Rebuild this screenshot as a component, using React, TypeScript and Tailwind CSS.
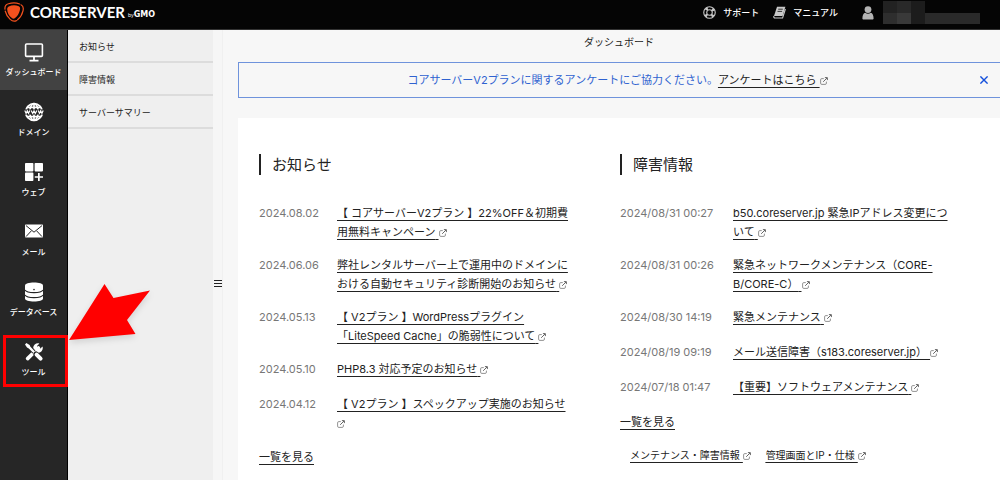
import type { ReactNode } from "react";

type Notice = {
  date: string;
  lines: string[];
  iconOnNewLine?: boolean;
};

type NavItem = {
  label: string;
  icon: ReactNode;
  active?: boolean;
  marked?: boolean;
};

const MonitorIcon = (
  <svg viewBox="0 0 20 20" className="size-5" fill="none" stroke="currentColor" strokeWidth="1.6">
    <rect x="1.6" y="2" width="16.8" height="12.4" rx="1" />
    <path d="M10 14v4M5.5 18.6h9" strokeWidth="1.8" />
  </svg>
);

const GlobeIcon = (
  <svg viewBox="0 0 20 20" className="size-5">
    <g fill="none" stroke="currentColor" strokeWidth="1.7">
      <circle cx="10" cy="10" r="8.4" />
      <ellipse cx="10" cy="10" rx="4.2" ry="8.4" />
      <path d="M10 1.6v16.8M2.8 5.4h14.4M2.8 14.6h14.4" />
    </g>
    <rect x="0" y="7.4" width="20" height="5.2" fill="#262626" />
    <path
      d="M.8 8.4l1.3 3 1.2-2.6 1.2 2.6 1.3-3M7.2 8.4l1.5 3L10 8.8l1.3 2.6 1.5-3M14.2 8.4l1.3 3 1.2-2.6 1.2 2.6 1.3-3"
      fill="none"
      stroke="currentColor"
      strokeWidth="1.2"
    />
  </svg>
);

const BlocksIcon = (
  <svg viewBox="0 0 20 20" className="size-5" fill="currentColor">
    <rect x="1" y="1" width="8.4" height="8.4" rx=".8" />
    <rect x="10.6" y="1" width="8.4" height="8.4" rx=".8" />
    <rect x="1" y="10.6" width="8.4" height="8.4" rx=".8" />
    <path d="M14 11h1.7v3.2H19v1.6h-3.3V19H14v-3.2h-3.2v-1.6H14z" />
  </svg>
);

const MailIcon = (
  <svg viewBox="0 0 20 20" className="size-5">
    <rect x="1" y="2.4" width="18" height="13.2" rx=".8" fill="currentColor" />
    <path
      d="M2 3.600l8 6.600 8-6.600M2 14.600l5.400-5.800M18 14.600l-5.400-5.800"
      fill="none"
      stroke="#262626"
      strokeWidth="1"
    />
  </svg>
);

const DatabaseIcon = (
  <svg viewBox="0 0 20 20" className="size-5">
    <path
      d="M1 3.4C1 1.6 5 .4 10 .4s9 1.2 9 3v13.2c0 1.8-4 3-9 3s-9-1.2-9-3z"
      fill="currentColor"
    />
    <path
      d="M1 8c1 1.700 4.600 2.600 9 2.600s8-.9 9-2.600M1 13c1 1.700 4.600 2.600 9 2.600s8-.9 9-2.600"
      fill="none"
      stroke="#262626"
      strokeWidth="1.1"
    />
    <circle cx="10" cy="7.6" r=".8" fill="#262626" />
  </svg>
);

const ToolsIcon = (
  <svg viewBox="0 0 20 20" className="size-5">
    <path d="M3.6 16.6L14.4 6" stroke="currentColor" strokeWidth="3.6" strokeLinecap="round" />
    <path
      d="M14.2 1.2a4.8 4.8 0 1 0 4.6 4.8l-.2-1.4-2.6 2.2-2.4-.6-.6-2.2 2.4-2.6z"
      fill="currentColor"
    />
    <path d="M3 3l7 7" stroke="#262626" strokeWidth="4" />
    <path d="M1 2.4L2.4 1l3.2 2 .8 1.8 4.6 4.6-1.6 1.6-4.6-4.6L3 5.6z" fill="currentColor" />
    <path d="M12 12l4.6 4.6" stroke="#262626" strokeWidth="5.2" strokeLinecap="round" />
    <path d="M12.6 12.6l4 4" stroke="currentColor" strokeWidth="4" strokeLinecap="round" />
  </svg>
);

const navItems: NavItem[] = [
  { label: "ダッシュボード", icon: MonitorIcon, active: true },
  { label: "ドメイン", icon: GlobeIcon },
  { label: "ウェブ", icon: BlocksIcon },
  { label: "メール", icon: MailIcon },
  { label: "データベース", icon: DatabaseIcon },
  { label: "ツール", icon: ToolsIcon, marked: true },
];

const subItems = ["お知らせ", "障害情報", "サーバーサマリー"];

const news: Notice[] = [
  { date: "2024.08.02", lines: ["【 コアサーバーV2プラン 】22%OFF＆初期費", "用無料キャンペーン"] },
  {
    date: "2024.06.06",
    lines: ["弊社レンタルサーバー上で運用中のドメインに", "おける自動セキュリティ診断開始のお知らせ"],
  },
  {
    date: "2024.05.13",
    lines: ["【 V2プラン 】WordPressプラグイン", "「LiteSpeed Cache」の脆弱性について"],
  },
  { date: "2024.05.10", lines: ["PHP8.3 対応予定のお知らせ"] },
  { date: "2024.04.12", lines: ["【 V2プラン 】スペックアップ実施のお知らせ"], iconOnNewLine: true },
];

const incidents: Notice[] = [
  { date: "2024/08/31 00:27", lines: ["b50.coreserver.jp 緊急IPアドレス変更につ", "いて"] },
  { date: "2024/08/31 00:26", lines: ["緊急ネットワークメンテナンス（CORE-", "B/CORE-C）"] },
  { date: "2024/08/30 14:19", lines: ["緊急メンテナンス"] },
  { date: "2024/08/19 09:19", lines: ["メール送信障害（s183.coreserver.jp）"] },
  { date: "2024/07/18 01:47", lines: ["【重要】ソフトウェアメンテナンス"] },
];

function ExternalIcon() {
  return (
    <svg
      viewBox="0 0 8 8"
      className="inline-block size-2 align-middle text-[#666]"
      fill="none"
      stroke="currentColor"
      strokeWidth=".7"
    >
      <path d="M6.4 4.6v1.6a1.2 1.2 0 0 1-1.2 1.2H1.8A1.2 1.2 0 0 1 .6 6.2V2.8a1.2 1.2 0 0 1 1.2-1.2h2" />
      <path d="M3.2 4.8L7 1M4.9.6h2.5v2.5" strokeWidth="1" />
    </svg>
  );
}

function NoticeList({ items, dateClass }: { items: Notice[]; dateClass: string }) {
  return (
    <ul className="flex flex-col gap-[14px]">
      {items.map((item) => (
        <li key={item.date} className="flex min-h-[21px] leading-[19px]">
          <time className={`shrink-0 text-[#777] ${dateClass}`}>{item.date}</time>
          <a href="#" className="whitespace-nowrap underline underline-offset-3">
            {item.lines.map((line, i) => (
              <span key={line}>
                {i > 0 && <br />}
                {line}
              </span>
            ))}
            {item.iconOnNewLine ? <br /> : "\u00a0"}
            <ExternalIcon />
          </a>
        </li>
      ))}
    </ul>
  );
}

function SectionTitle({ children }: { children: ReactNode }) {
  return (
    <h2 className="mb-[29px] border-l-2 border-[#222] pl-[11px] text-[15px] leading-[21px]">
      {children}
    </h2>
  );
}

function Header() {
  return (
    <header className="flex h-[30px] items-center border-b border-[#333] bg-[#050505] text-white">
      <a href="#" className="flex items-center pb-[5px] pl-1">
        <svg viewBox="0 0 20 20" className="size-5">
          <path
            d="M4.8 4.400C7.600 3 11.600 2.800 14.800 4.200c1.400.8 1.600 2 1 4.200-.8 3.200-2.600 6-5 7.800-1.200.8-2 .6-3.200-.4-2.600-2.200-4.200-5-4.400-8.400 0-1.600.4-2.400 1.600-3z"
            fill="#f4511e"
          />
          <path
            d="M1 7.200C.6 4.200 1.800 2.600 4.400 1.800 8 .6 12.200.6 15.600 2M17 2.800c2.400 1 2.600 3.400 2 6-.8 3.400-2.800 6.800-5.400 9M12.400 18.600c-2.200 1.200-4.200.6-6.200-1.200C3.600 15 2 12.400 1.200 9"
            fill="none"
            stroke="#f4511e"
            strokeWidth="1.2"
            strokeLinecap="round"
          />
        </svg>
        <span className="ml-[6px] font-['Lato',sans-serif] text-[15px] leading-5 font-bold">
          CORESERVER
        </span>
        <span className="ml-[3px] pt-[6px] text-[5px] leading-3">by</span>
        <span className="pt-[5px] font-['DejaVu_Sans',sans-serif] text-[8px] leading-3 font-bold">
          GMO
        </span>
      </a>
      <nav className="mr-[20px] mb-1 ml-auto flex items-center text-[9px] font-medium">
        <a href="#" className="flex items-center gap-[7px]">
          <svg viewBox="0 0 14 14" className="size-[13px] text-[#c8c8c8]" fill="none" stroke="currentColor">
            <circle cx="7" cy="7" r="6.2" strokeWidth="1.2" />
            <circle cx="7" cy="7" r="3" strokeWidth="1.2" />
            <circle cx="7" cy="7" r="4.6" strokeWidth="3" strokeDasharray="2.4 4.83" strokeDashoffset="-2.4" />
          </svg>
          サポート
        </a>
        <a href="#" className="ml-[14px] flex items-center gap-[7px]">
          <svg viewBox="0 0 13 13" className="size-[13px]">
            <path d="M4 .8h8.4L9.6 10H1z" fill="#c8c8c8" />
            <path d="M1 10c-.6 1 0 2 1 2h7.6l2.8-9" fill="none" stroke="#c8c8c8" strokeWidth="1.1" />
            <path d="M5.2 3.2h4.6M4.5 5.4h4.6" stroke="#222" strokeWidth=".9" />
          </svg>
          マニュアル
        </a>
        <a href="#" aria-label="アカウント" className="ml-[24px] flex items-center gap-[9px]">
          <svg viewBox="0 0 12 14" className="h-[14px] w-3 text-[#b4b4b4]" fill="currentColor">
            <circle cx="6" cy="3.6" r="3.4" />
            <path d="M.4 12.6C.4 9 1.6 7.2 3.2 6.8c1.6 1.2 4 1.2 5.6 0 1.6.4 2.8 2.2 2.8 5.8 0 .6-.6 1-1.2 1H1.6c-.6 0-1.2-.4-1.2-1z" />
          </svg>
          <svg viewBox="0 0 97 23" className="h-[23px] w-[97px]">
            <path d="M0 0h14v12H0z" fill="#222" />
            <path d="M14 0h14v12H14z" fill="#292929" />
            <path d="M28 0h14v23H28z" fill="#1c1c1c" />
            <path d="M0 12h14v11H0z" fill="#2e2e2e" />
            <path d="M14 12h14v11H14z" fill="#393939" />
            <path d="M42 12h55v11H42z" fill="#2a2a2a" />
          </svg>
        </a>
      </nav>
    </header>
  );
}

function SideNav() {
  return (
    <nav className="w-[68px] shrink-0 border-r border-black bg-[#262626] text-white">
      {navItems.map((item) => (
        <a
          key={item.label}
          href="#"
          className={`relative flex h-[60px] flex-col items-center gap-[5px] pt-[12px] text-[8px] leading-[10px] font-medium whitespace-nowrap ${
            item.active ? "bg-[#424242]" : ""
          }`}
        >
          {item.icon}
          {item.label}
          {item.marked && (
            <>
              <span className="absolute top-[5px] left-[3px] h-[52px] w-[65px] border-3 border-[#f00]" />
              <svg
                viewBox="0 0 100 76"
                className="absolute -top-[56px] left-[60px] z-10 h-[76px] w-[100px] drop-shadow-md"
              >
                <path d="M9 66L44.5 10l9 14L90 16.500 67 46l8.500 14z" fill="#f00" />
              </svg>
            </>
          )}
        </a>
      ))}
    </nav>
  );
}

export default function App() {
  return (
    <div className="flex h-screen flex-col overflow-hidden bg-[#f7f7f7] font-['Inter','Noto_Sans_CJK_JP',sans-serif] text-[#222]">
      <Header />
      <div className="flex min-h-0 flex-1">
        <SideNav />
        <aside className="w-[145px] shrink-0 bg-[#efefef] text-[9px]">
          {subItems.map((label) => (
            <a
              key={label}
              href="#"
              className="flex h-[33px] items-center border-b-2 border-[#dcdcdc] pt-0.5 pl-[11px]"
            >
              {label}
            </a>
          ))}
        </aside>
        <div className="flex w-[10px] shrink-0 justify-center border-r border-[#f0f0f0] bg-[#f6f6f6] pt-[250px]">
          <button type="button" aria-label="メニュー幅の変更" className="h-[7px] w-2">
            <svg viewBox="0 0 8 7" className="h-[7px] w-2" stroke="#222" strokeWidth="1">
              <path d="M0 .5h8M0 3.500h8M0 6.500h8" />
            </svg>
          </button>
        </div>
        <main className="min-w-0 flex-1 pl-[15px]">
          <h1 className="py-1 text-center text-[10px] leading-4">ダッシュボード</h1>
          <div className="mt-2 flex h-[36px] items-center border border-r-0 border-[#6f93dc] text-[11px]">
            <p className="flex-1 pl-[16px] text-center text-[#2f62d0]">
              コアサーバーV2プランに関するアンケートにご協力ください。
              <a href="#" className="text-[#222] underline underline-offset-3">
                アンケートはこちら&nbsp;
                <ExternalIcon />
              </a>
            </p>
            <button type="button" aria-label="閉じる" className="mr-[12px] size-2 text-[#1450dc]">
              <svg viewBox="0 0 8 8" className="size-2" stroke="currentColor" strokeWidth="1.4">
                <path d="M.4.4l7.200 7.200M7.600.4L.4 7.600" />
              </svg>
            </button>
          </div>
          <div className="mt-5 grid min-h-full grid-cols-2 content-start bg-white pt-[36px] pr-[19px] pl-[21px] text-[11px]">
            <section>
              <SectionTitle>お知らせ</SectionTitle>
              <NoticeList items={news} dateClass="w-[78px]" />
              <a href="#" className="mt-[15px] inline-block leading-[19px] underline underline-offset-3">
                一覧を見る
              </a>
            </section>
            <section>
              <SectionTitle>障害情報</SectionTitle>
              <NoticeList items={incidents} dateClass="w-[113px]" />
              <a href="#" className="mt-[14px] inline-block leading-[19px] underline underline-offset-3">
                一覧を見る
              </a>
              <div className="mt-[14px] flex gap-[15px] pl-[10px] text-[10px] leading-[19px] underline underline-offset-3">
                <a href="#">
                  メンテナンス・障害情報&nbsp;
                  <ExternalIcon />
                </a>
                <a href="#">
                  管理画面とIP・仕様&nbsp;
                  <ExternalIcon />
                </a>
              </div>
            </section>
          </div>
        </main>
      </div>
    </div>
  );
}
